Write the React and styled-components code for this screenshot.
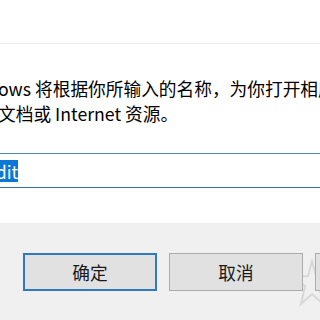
import React, { useLayoutEffect, useRef, useState } from 'react';
import styled, { createGlobalStyle } from 'styled-components';

const GlobalStyle = createGlobalStyle`
  html, body { margin: 0; padding: 0; overflow: hidden; background: #ffffff; }
  body { font-family: "Noto Sans CJK SC", "Noto Sans", sans-serif; }
`;

const Viewport = styled.div`
  position: relative;
  width: 320px;
  height: 320px;
  overflow: hidden;
`;

const Dialog = styled.div`
  width: 583px;
  margin-left: -120px;
  display: flex;
  flex-direction: column;
  background: #ffffff;
  color: #000000;
  font-size: 17.7px;
`;

const TitleBar = styled.div`
  height: 43px;
  border-bottom: 1px solid #ececec;
  display: flex;
  align-items: center;
  gap: 10px;
  padding-left: 14px;
  font-size: 15px;
`;

const Body = styled.div`
  display: flex;
  flex-direction: column;
  padding: 32px 0 35px;
`;

const TopRow = styled.div`
  display: flex;
  align-items: flex-start;
  gap: 60px;
  padding-left: 20px;
`;

const DescBox = styled.div`
  line-height: 25px;
  min-width: 0;
`;

const Line = styled.span`
  display: block;
  white-space: nowrap;
`;

const InputRow = styled.div`
  display: flex;
  align-items: center;
  margin-top: 27px;
  padding-left: 20px;
`;

const Label = styled.span`
  width: 55px;
  white-space: nowrap;
  overflow: hidden;
`;

const Combo = styled.div`
  flex: 1;
  height: 35px;
  box-sizing: border-box;
  border: 1px solid #4a86b8;
  border-bottom-color: #2f6fa6;
  display: flex;
  align-items: center;
  padding-left: ${(p) => p.$indent}px;
  margin-right: 20px;
`;

const Selected = styled.span`
  background: #0a78d4;
  color: #ffffff;
  line-height: 22px;
  white-space: nowrap;
`;

const Footer = styled.div`
  position: relative;
  height: 94px;
  background: #f0f0f0;
  border-bottom: 3px solid #5a5a5a;
  display: flex;
  justify-content: flex-end;
  align-items: flex-start;
  gap: 12px;
  padding: 30px 14px 0 0;
`;

const Button = styled.div`
  position: relative;
  z-index: 1;
  width: 134px;
  height: 38px;
  box-sizing: border-box;
  display: flex;
  align-items: center;
  justify-content: center;
  background: #e1e1e1;
  border: ${(p) => (p.$primary ? '2px solid #2f78c2' : '1px solid #adadad')};
  color: #1a1a1a;
  font-size: 17.7px;
`;

const Watermark = styled.svg`
  position: absolute;
  left: 414px;
  top: 36px;
  width: 36px;
  height: 48px;
  z-index: 0;
`;

function RunIcon() {
  return (
    <svg width="40" height="40" viewBox="0 0 40 40">
      <rect x="4" y="8" width="32" height="24" fill="#3a7bd5" />
      <rect x="6" y="12" width="28" height="18" fill="#ffffff" />
    </svg>
  );
}

function Description() {
  const lead1 = useRef(null);
  const lead2 = useRef(null);
  const [shift, setShift] = useState([-40, -37]);

  useLayoutEffect(() => {
    const measure = () => {
      const w1 = lead1.current.getBoundingClientRect().width;
      const w2 = lead2.current.getBoundingClientRect().width;
      setShift([35 - w1, -2 - w2]);
    };
    measure();
    if (document.fonts && document.fonts.ready) document.fonts.ready.then(measure);
  }, []);

  return (
    <DescBox>
      <Line style={{ marginLeft: shift[0] }}>
        <span ref={lead1}>Windows </span>将根据你所输入的名称，为你打开相应的程序、文件
      </Line>
      <Line style={{ marginLeft: shift[1] }}>
        <span ref={lead2}>夹、</span>文档或 Internet 资源。
      </Line>
    </DescBox>
  );
}

export default function App() {
  return (
    <Viewport>
      <GlobalStyle />
      <Dialog>
        <TitleBar>
          <svg width="16" height="16" viewBox="0 0 16 16">
            <rect x="1" y="3" width="14" height="10" fill="#3a7bd5" />
          </svg>
          <span>运行</span>
        </TitleBar>
        <Body>
          <TopRow>
            <RunIcon />
            <Description />
          </TopRow>
          <InputRow>
            <Label>打开(O):</Label>
            <Combo $indent={4}>
              <Selected>regedit</Selected>
            </Combo>
          </InputRow>
        </Body>
        <Footer>
          <Button $primary>确定</Button>
          <Button>取消</Button>
          <Button>浏览(B)...</Button>
          <Watermark viewBox="0 0 36 48">
            <polygon
              points="18,2 22,17 35,18 25,27 29,45 18,35 7,45 11,27 1,18 14,17"
              fill="none"
              stroke="#d8d8d8"
              strokeWidth="2"
            />
          </Watermark>
        </Footer>
      </Dialog>
    </Viewport>
  );
}
